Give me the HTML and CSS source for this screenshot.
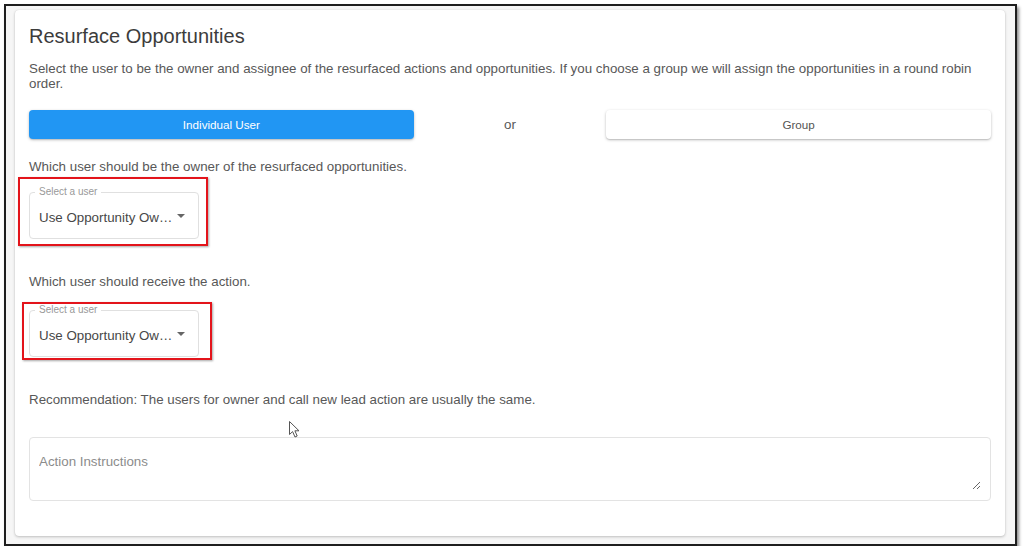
FILE: index.html
```html
<!doctype html>
<html>
<head>
  <title>Resurface Opportunities</title>
  <link rel="stylesheet" href="styles.css">
</head>
<body>

  <div class='frame'>
    <div class='card'>
      <h2 class='title'>Resurface Opportunities</h2>
      <p class='intro'>Select the user to be the owner and assignee of the resurfaced actions and opportunities. If you choose a group we will assign the opportunities in a round robin order.</p>

      <div class='choice'>
        <button class='btn btn-primary'>Individual User</button>
        <span class='or'>or</span>
        <button class='btn'>Group</button>
      </div>

      <p class='question'>Which user should be the owner of the resurfaced opportunities.</p>
      <div class='field'>
        <fieldset class='select'>
          <legend>Select a user</legend>
          <span class='value'>Use Opportunity Ow…</span>
          <svg class='caret' width='16' height='20' viewBox='0 0 16 20'><polygon points='4,6 12,6 8,10' fill='#666'/></svg>
        </fieldset>
        <div class='mark mark-owner'></div>
      </div>

      <p class='question question-assignee'>Which user should receive the action.</p>
      <div class='field field-assignee'>
        <fieldset class='select'>
          <legend>Select a user</legend>
          <span class='value'>Use Opportunity Ow…</span>
          <svg class='caret' width='16' height='20' viewBox='0 0 16 20'><polygon points='4,6 12,6 8,10' fill='#666'/></svg>
        </fieldset>
        <div class='mark mark-assignee'></div>
      </div>

      <p class='question recommend'>Recommendation: The users for owner and call new lead action are usually the same.</p>

      <div class='notes'>
        <textarea placeholder='Action Instructions'></textarea>
      </div>
    </div>
  </div>

  <!-- mouse pointer left in the capture -->
  <svg class='cursor' width='12' height='18' viewBox='0 0 12 18'>
    <path d='M0.5,0.5 L0.5,13.5 L3.6,10.6 L6,16 L8.2,15 L5.9,9.8 L10,9.8 Z' fill='#fff' stroke='#555' stroke-width='1' stroke-linejoin='round'/>
  </svg>

</body>
</html>
```

FILE: styles.css
```css
body{
  margin: 0;
  background-color: #fff;
  font-family: "Liberation Sans", Arial, sans-serif;
  font-size: 13.33px;
  color: #585858;
}

/* screenshot frame */
.frame{
  width: 1013px;
  margin: 4px 0 0 4px;
  box-sizing: border-box;
  border: 2px solid #1e1e1e;
  background-color: #f6f6f6;
  padding: 4px 10px 8px 9px;
  box-shadow: 2px 3px 3px rgba(0,0,0,0.45);
}

.card{
  background-color: #fff;
  border-radius: 4px;
  padding: 14px 14px 35px;
  box-shadow: 0 1px 3px rgba(0,0,0,0.22), 0 0 1px rgba(0,0,0,0.12);
}

.title{
  margin: 0;
  font-size: 20px;
  line-height: 24px;
  font-weight: normal;
  color: #3c3c3c;
}

.intro{
  margin: 13px 0 0;
  line-height: 15px;
}

/* individual / group toggle */
.choice{
  display: grid;
  grid-template-columns: 2fr 1fr 2fr;
  margin-top: 19px;
  height: 29px;
}
.btn{
  height: 29px;
  border: none;
  border-radius: 4px;
  background-color: #fff;
  color: #555;
  font-family: inherit;
  font-size: 11.67px;
  box-shadow: 0 1px 3px rgba(0,0,0,0.25), 0 1px 1px rgba(0,0,0,0.08);
}
.btn-primary{
  background-color: #2196f3;
  color: #fff;
}
.or{
  text-align: center;
  line-height: 29px;
}

.question{
  margin: 20px 0 0;
  line-height: 15px;
}
.question-assignee{
  margin-top: 35px;
}
.recommend{
  margin-top: 35px;
}

/* outlined select */
.field{
  position: relative;
  width: 170px;
  margin-top: 12px;
}
.field-assignee{
  margin-top: 15px;
}
.select{
  display: flex;
  align-items: center;
  margin: 0;
  min-width: 0;
  padding: 10px 9px;
  border: 1px solid #e0e0e0;
  border-radius: 4px;
}
.select legend{
  font-size: 10px;
  line-height: 12px;
  color: #999;
  padding: 0 4px;
  margin-left: -4px;
}
.value{
  flex: 1;
  min-width: 0;
  white-space: nowrap;
  line-height: 20px;
  color: #474747;
}
.caret{
  flex: none;
  display: block;
}

/* red annotation boxes */
.mark{
  position: absolute;
  border: 2px solid #e3141b;
  box-shadow: 1px 1px 2px rgba(0,0,0,0.35);
  pointer-events: none;
}
.mark-owner{
  top: -9px;
  left: -11px;
  right: -9px;
  bottom: -7px;
}
.mark-assignee{
  top: -2px;
  left: -7px;
  right: -13px;
  bottom: -3px;
}

.notes{
  margin-top: 30px;
  border: 1px solid #e3e3e3;
  border-radius: 4px;
  padding: 14px 9px 10px;
}
.notes textarea{
  display: block;
  width: 100%;
  height: 38px;
  box-sizing: border-box;
  margin: 0;
  padding: 0;
  border: none;
  outline: none;
  background: transparent;
  font-family: inherit;
  font-size: 13.33px;
  line-height: 20px;
  color: #444;
}
.notes textarea::placeholder{
  color: #8c8c8c;
}

.cursor{
  position: absolute;
  left: 289px;
  top: 421px;
}
```
